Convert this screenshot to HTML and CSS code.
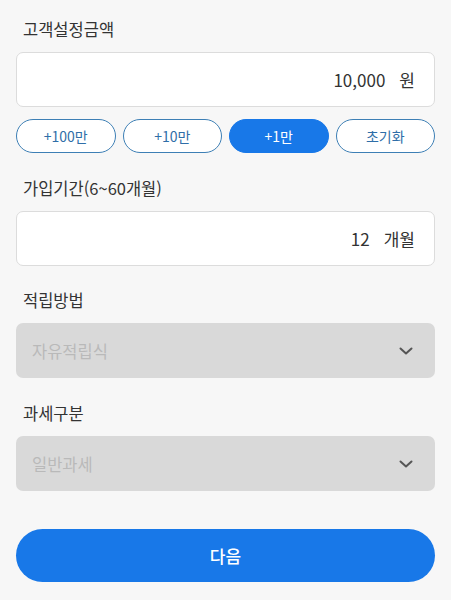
FILE: index.html
```html
<!DOCTYPE html>
<html lang="ko">

<head>
  <meta charset="UTF-8">
  <meta name="viewport" content="width=device-width, initial-scale=1.0">
  <title>적금 계산</title>
  <link rel="stylesheet" href="styles.css">
</head>

<body>
  <div class="form">
    <div class="section">
      <div class="label">고객설정금액</div>
      <div class="field">
        <span class="value">10,000</span>
        <span class="unit">원</span>
      </div>
      <div class="quick">
        <button class="chip">+100만</button>
        <button class="chip">+10만</button>
        <button class="chip active">+1만</button>
        <button class="chip">초기화</button>
      </div>
    </div>

    <div class="section s2">
      <div class="label">가입기간(6~60개월)</div>
      <div class="field">
        <span class="value">12</span>
        <span class="unit">개월</span>
      </div>
    </div>

    <div class="section s3">
      <div class="label">적립방법</div>
      <div class="select">
        <span>자유적립식</span>
        <svg class="arrow" width="14" height="8" viewBox="0 0 14 8">
          <path d="M1.5 1.5 L7 6.5 L12.5 1.5" fill="none" stroke="#555" stroke-width="2" stroke-linecap="round" stroke-linejoin="round" />
        </svg>
      </div>
    </div>

    <div class="section s4">
      <div class="label">과세구분</div>
      <div class="select">
        <span>일반과세</span>
        <svg class="arrow" width="14" height="8" viewBox="0 0 14 8">
          <path d="M1.5 1.5 L7 6.5 L12.5 1.5" fill="none" stroke="#555" stroke-width="2" stroke-linecap="round" stroke-linejoin="round" />
        </svg>
      </div>
    </div>

    <button class="next">다음</button>
  </div>
</body>

</html>
```

FILE: styles.css
```css
body,
html {
  margin: 0;
  padding: 0;
  background: #f7f7f7;
  font-family: "Noto Sans CJK KR", "Noto Sans", sans-serif;
}

.form {
  padding: 18px 16px 0 16px;
}

.label {
  height: 22px;
  line-height: 22px;
  padding-left: 7px;
  font-size: 16.5px;
  font-weight: 400;
  color: #333;
  margin-bottom: 12px;
}

.s2 {
  margin-top: 24px;
}

.s3 {
  margin-top: 23px;
}

.s4 {
  margin-top: 24px;
}

.field {
  height: 55px;
  box-sizing: border-box;
  background: #fff;
  border: 1px solid #dcdcdc;
  border-radius: 7px;
  display: flex;
  align-items: center;
  justify-content: flex-end;
  padding-right: 19px;
  font-size: 17px;
  color: #333;
}

.field .unit {
  margin-left: 14px;
}

.quick {
  display: flex;
  gap: 7px;
  margin-top: 12px;
}

.chip {
  flex: 1;
  height: 34px;
  border: 1px solid #3d7fb5;
  border-radius: 17px;
  background: #fff;
  color: #2f6ea8;
  font-family: inherit;
  font-size: 14px;
  padding: 0;
}

.chip.active {
  background: #1878e8;
  border-color: #1878e8;
  color: #fff;
}

.select {
  height: 55px;
  box-sizing: border-box;
  background: #d9d9d9;
  border-radius: 7px;
  display: flex;
  align-items: center;
  justify-content: space-between;
  padding: 0 22px 0 16px;
  font-size: 16.5px;
  color: #b9b9b9;
}

.next {
  display: block;
  width: 100%;
  height: 53px;
  margin-top: 38px;
  border: none;
  border-radius: 27px;
  background: #1878e8;
  color: #fff;
  font-family: inherit;
  font-size: 17px;
  font-weight: 500;
}
```
